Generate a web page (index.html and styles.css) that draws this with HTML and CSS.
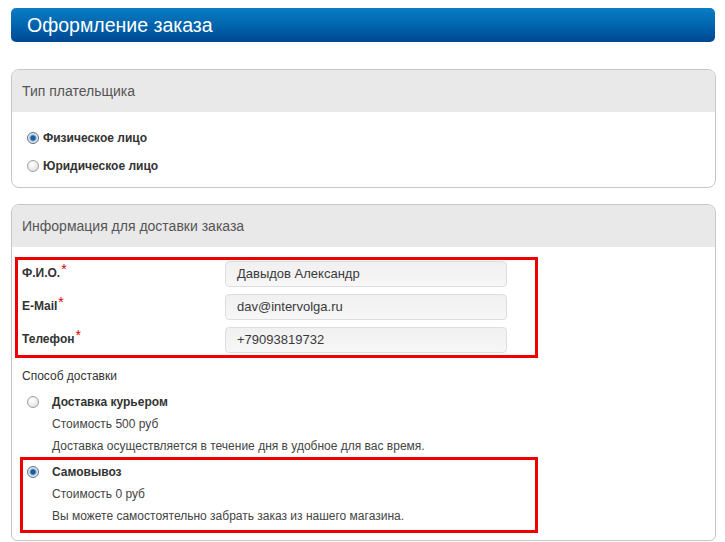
FILE: index.html
```html
<!DOCTYPE html>
<html lang="ru">
<head>
<meta charset="utf-8">
<title>Оформление заказа</title>
<link rel="stylesheet" href="styles.css">
</head>
<body>
<div class="page">
  <div class="title-bar"><h1 class="title">Оформление заказа</h1></div>

  <div class="panel payer-panel">
    <div class="panel-head">Тип плательщика</div>
    <div class="panel-body payer-body">
      <div class="radio-row"><span class="radio checked"></span><span class="rlabel">Физическое лицо</span></div>
      <div class="radio-row"><span class="radio"></span><span class="rlabel">Юридическое лицо</span></div>
    </div>
  </div>

  <div class="panel delivery-panel">
    <div class="panel-head">Информация для доставки заказа</div>
    <div class="panel-body delivery-body">
      <div class="highlight fields">
        <div class="field"><span class="flabel">Ф.И.О.<sup class="req">*</sup></span><div class="input">Давыдов Александр</div></div>
        <div class="field"><span class="flabel">E-Mail<sup class="req">*</sup></span><div class="input">dav@intervolga.ru</div></div>
        <div class="field"><span class="flabel">Телефон<sup class="req">*</sup></span><div class="input">+79093819732</div></div>
      </div>
      <div class="section-title">Способ доставки</div>
      <div class="option courier">
        <div class="option-row"><span class="radio"></span><span class="oname">Доставка курьером</span></div>
        <div class="odesc">Стоимость 500 руб</div>
        <div class="odesc">Доставка осуществляется в течение дня в удобное для вас время.</div>
      </div>
      <div class="highlight option pickup">
        <div class="option-row"><span class="radio checked"></span><span class="oname">Самовывоз</span></div>
        <div class="odesc">Стоимость 0 руб</div>
        <div class="odesc">Вы можете самостоятельно забрать заказ из нашего магазина.</div>
      </div>
    </div>
  </div>
</div>
</body>
</html>
```

FILE: styles.css
```css
html, body {
  margin: 0;
  padding: 0;
  background: #ffffff;
}
body {
  font-family: "Liberation Sans", Arial, sans-serif;
  font-size: 12px;
  color: #444;
}
.page {
  padding: 8px 9px 0 11px;
}
.title-bar {
  width: 704px;
  height: 34px;
  border-radius: 5px;
  background: linear-gradient(to bottom, #0a7dc6 0%, #0062ab 55%, #004892 100%);
}
.title {
  margin: 0;
  padding-left: 16px;
  font-size: 19.5px;
  font-weight: normal;
  line-height: 34px;
  color: #ffffff;
}
.panel {
  border: 1px solid #c6c6c6;
  border-radius: 8px;
  overflow: hidden;
  background: #fff;
}
.payer-panel {
  margin-top: 27px;
}
.delivery-panel {
  margin-top: 16px;
  border-bottom-left-radius: 6px;
  border-bottom-right-radius: 6px;
}
.panel-head {
  height: 42px;
  line-height: 42px;
  padding-left: 10px;
  background: #e9e9e9;
  font-size: 14px;
  color: #555;
}
.payer-body {
  padding: 18px 0 13px 15px;
  display: flex;
  flex-direction: column;
  gap: 12px;
}
.radio-row {
  display: flex;
  align-items: center;
  height: 16px;
}
.radio {
  box-sizing: border-box;
  width: 12px;
  height: 12px;
  border-radius: 50%;
  border: 1px solid #a0a0a0;
  background: radial-gradient(circle at 40% 35%, #ffffff 0%, #ececec 55%, #cfcfcf 100%);
  flex: none;
}
.radio.checked {
  border-color: #5a6f84;
  background: radial-gradient(circle at 50% 50%, #1d5f9c 0%, #1a5b97 28%, #7fa8cf 42%, #e9eef3 60%, #d2d7dc 100%);
}
.rlabel {
  margin-left: 4px;
  font-weight: bold;
  color: #333;
}
.delivery-body {
  padding: 10px 0 7px 0;
  display: flex;
  flex-direction: column;
  align-items: flex-start;
}
.highlight {
  border: 3px solid #ee0000;
  box-sizing: border-box;
}
.fields {
  margin-left: 3px;
  width: 523px;
  padding: 1px 28px 2px 4px;
  display: flex;
  flex-direction: column;
  gap: 7px;
}
.field {
  display: flex;
  align-items: center;
  height: 26px;
}
.flabel {
  width: 203px;
  font-weight: bold;
  color: #333;
  margin-top: -3px;
}
.req {
  color: #d40000;
  font-size: 14px;
  vertical-align: 3px;
  line-height: 0;
  font-weight: normal;
  margin-left: 1px;
}
.input {
  box-sizing: border-box;
  width: 282px;
  height: 26px;
  line-height: 24px;
  padding-left: 11px;
  border: 1px solid #dedede;
  border-radius: 4px;
  background: linear-gradient(to bottom, #f0f0f0 0%, #f4f4f4 60%, #f7f7f7 100%);
  font-size: 13px;
  color: #3a3a3a;
}
.section-title {
  margin: 10px 0 0 10px;
  line-height: 16px;
  color: #333;
}
.option {
  display: flex;
  flex-direction: column;
}
.courier {
  margin-top: 7px;
  padding-left: 15px;
}
.pickup {
  margin: 0 0 0 8px;
  width: 518px;
  padding: 1px 0 3px 4px;
}
.option-row {
  display: flex;
  align-items: center;
  height: 22px;
}
.oname {
  margin-left: 13px;
  font-weight: bold;
  color: #333;
}
.odesc {
  line-height: 22px;
  padding-left: 25px;
  color: #444;
}
```
